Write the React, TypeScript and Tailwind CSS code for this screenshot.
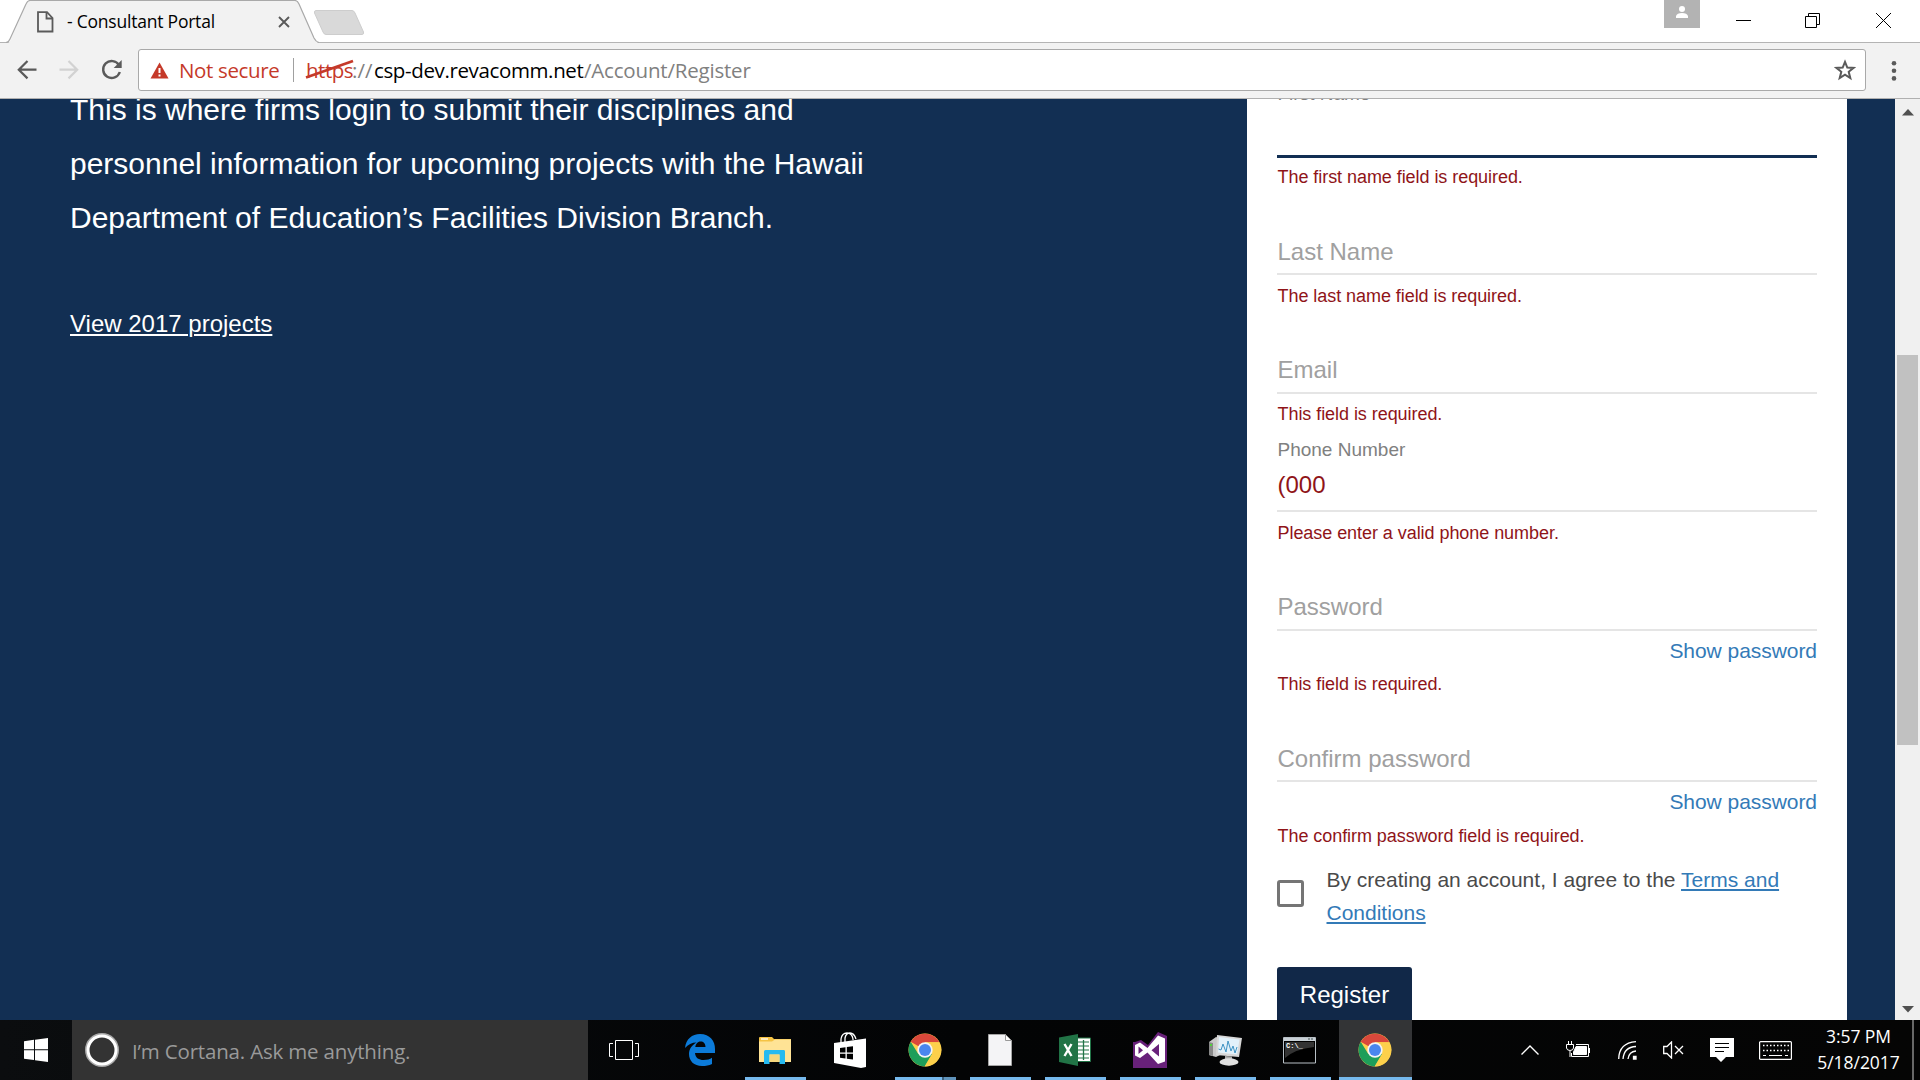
import React from "react";

function TabStrip() {
  return (
    <div className="flex h-[43px] items-start bg-white border-b border-[#b4b4b4] shrink-0">
      <div className="relative h-[43px] w-[320px] shrink-0">
        <svg className="absolute left-0 top-0" width="320" height="43" viewBox="0 0 320 43">
          <path d="M8 43Q10 42 11 39L26 4Q27.500 .5 30 .5H295Q297.500 .5 299 4L314 38Q316 42.500 319 43Z" fill="#f2f2f2" />
          <path d="M6 42.500Q9 42 10 39L26 4Q27.500 .5 30 .5H295Q297.500 .5 299 4L314 38Q316 42 319 42.500" fill="none" stroke="#a9a9a9" strokeWidth="1.200" />
        </svg>
        <div className="relative flex h-[43px] items-center pl-[37px]">
          <svg width="17" height="22" viewBox="0 0 17 22" fill="none" stroke="#5a5a5a" strokeWidth="1.800">
            <path d="M1 1.200H10L15.500 7V20.500H1Z" />
            <path d="M9.500 1.500V7.500H15" />
          </svg>
          <span className="-mt-[2px] ml-[13px] w-[148px] whitespace-nowrap text-[17.500px] leading-[22px] tracking-[-0.220px] text-black font-['Open_Sans',sans-serif]">- Consultant Portal</span>
          <svg className="ml-[63px] mt-px" width="12" height="12" viewBox="0 0 12 12" stroke="#5a5a5a" strokeWidth="1.900">
            <path d="M1 1L11 11M11 1L1 11" />
          </svg>
        </div>
      </div>
      <svg className="-ml-[7px] mt-[9px] shrink-0" width="52" height="27" viewBox="0 0 52 27">
        <path d="M3 1.500H39Q41 1.500 42 4L50.500 23Q51 25.500 49 25.500H13Q11 25.500 10 23L1.500 4Q1 1.500 3 1.500Z" fill="#d9d9d9" stroke="#cdcdcd" />
      </svg>
      <div className="ml-auto flex items-start">
        <div className="flex h-7 w-9 justify-center bg-[#b3b3b3]">
          <svg width="12" height="19" viewBox="0 0 12 19" fill="#fff">
            <circle cx="6" cy="9" r="3" />
            <path d="M0 18V16Q1 13 6 13T12 16V18Z" />
          </svg>
        </div>
        <svg className="ml-9 mt-[12px]" width="15" height="17" viewBox="0 0 15 17"><path d="M0 8.500H15" stroke="#000" /></svg>
        <svg className="ml-[54px] mt-[12px]" width="15" height="17" viewBox="0 0 15 17" fill="none" stroke="#000">
          <path d="M.5 4.500H11.500V15.500H.5ZM3.500 4.500V1.500H14.500V12.500H11.500" />
        </svg>
        <svg className="ml-[56px] mr-[29px] mt-[12px]" width="15" height="17" viewBox="0 0 15 17" stroke="#000"><path d="M0 1L15 16M15 1L0 16" /></svg>
      </div>
    </div>
  );
}

function Toolbar() {
  return (
    <div className="flex h-[56px] shrink-0 items-start border-b border-[#b0b0b0] bg-[#f2f2f2] pt-[6px]">
      <svg className="ml-[17px] mt-[11px]" width="20" height="20" viewBox="0 0 20 20" fill="none" stroke="#5a5a5a" strokeWidth="2.200">
        <path d="M19.500 9.700H2M10.500 1L1.800 9.700L10.500 18.400" />
      </svg>
      <svg className="ml-[22px] mt-[11px]" width="20" height="20" viewBox="0 0 20 20" fill="none" stroke="#d2d2d2" strokeWidth="2.200">
        <path d="M.5 9.700H18M9.500 1L18.200 9.700L9.500 18.400" />
      </svg>
      <svg className="ml-[22px] mt-[10px]" width="22" height="22" viewBox="0 0 22 22">
        <path d="M18 6.200A8.500 8.500 0 1 0 18.800 13" fill="none" stroke="#5a5a5a" strokeWidth="2.400" />
        <path d="M20.700 1V9H12.700Z" fill="#5a5a5a" />
      </svg>
      <div className="ml-[15px] flex h-[42px] w-[1728px] items-center rounded-[3px] border border-[#a9a9a9] bg-white">
        <svg className="ml-[11px]" width="19" height="17" viewBox="0 0 19 17">
          <path d="M9.500 .5L18.500 16.500H.5Z" fill="#c53929" />
          <path d="M9.500 6V11M9.500 12.500V14.500" stroke="#fff" strokeWidth="2" />
        </svg>
        <span className="ml-[10px] w-[102px] whitespace-nowrap text-[20.500px] leading-[28px] tracking-[-0.350px] text-[#c53929] font-['Open_Sans',sans-serif]">Not secure</span>
        <span className="ml-[12px] h-6 w-px bg-[#a0a0a0]" />
        <div className="ml-[12px] flex whitespace-nowrap text-[20.500px] leading-[28px] text-[#808080] font-['Open_Sans',sans-serif]">
          <span className="relative w-[46px] tracking-[-0.500px] text-[#c53929]">
            https
            <svg className="absolute -left-px top-[3px]" width="50" height="22" viewBox="0 0 50 22"><path d="M1 18.500L48 2" stroke="#c53929" strokeWidth="2.800" /></svg>
          </span>
          <span className="w-[22px]">://</span>
          <span className="w-[210px] tracking-[-0.370px] text-black">csp-dev.revacomm.net</span>
          <span className="tracking-[-0.190px]">/Account/Register</span>
        </div>
        <svg className="ml-auto mr-[9px]" width="22" height="22" viewBox="0 0 22 22" fill="none" stroke="#5a5a5a" strokeWidth="2">
          <path d="M11 2.800L13.300 8.500L19.500 8.900L14.700 12.800L16.300 19L11 15.600L5.700 19L7.300 12.800L2.500 8.900L8.700 8.500Z" />
        </svg>
      </div>
      <svg className="ml-[25px] mt-[11px]" width="6" height="22" viewBox="0 0 6 22" fill="#5a5a5a">
        <circle cx="3" cy="3.200" r="2.300" /><circle cx="3" cy="10.800" r="2.300" /><circle cx="3" cy="18.400" r="2.300" />
      </svg>
    </div>
  );
}

function ErrorText({ children }: { children: React.ReactNode }) {
  return <p className="h-6 whitespace-nowrap pl-[0.500px] text-[18px] leading-6 tracking-[-0.055px] text-[#8f1418]">{children}</p>;
}
function Label({ children }: { children: React.ReactNode }) {
  return <div className="h-8 whitespace-nowrap pl-[0.500px] text-2xl leading-8 text-[#a0a0a0]">{children}</div>;
}
function ShowPassword() {
  return <a className="block h-7 text-right text-[21px] leading-7 tracking-[-0.050px] text-[#337ab7]">Show password</a>;
}

function Form() {
  return (
    <section className="h-full w-[600px] shrink-0 overflow-hidden bg-white px-[30px]">
      <div className="-mt-[17px] h-6 pl-[0.500px] text-[19px] leading-6 text-[#808080]">First Name</div>
      <div className="mt-[49px] h-[3px] bg-[#122f53]" />
      <div className="mt-[7px]"><ErrorText>The first name field is required.</ErrorText></div>
      <div className="mt-[47px]"><Label>Last Name</Label></div>
      <div className="mt-[5px] h-[2px] bg-[#e5e5e5]" />
      <div className="mt-[9px]"><ErrorText>The last name field is required.</ErrorText></div>
      <div className="mt-[46px]"><Label>Email</Label></div>
      <div className="mt-[6px] h-[2px] bg-[#e5e5e5]" />
      <div className="mt-[8px]"><ErrorText>This field is required.</ErrorText></div>
      <div className="mt-[12px] h-6 pl-[0.500px] text-[19px] leading-6 text-[#808080]">Phone Number</div>
      <div className="mt-[7px] h-8 pl-[0.500px] text-2xl leading-8 text-[#8f1418]">(000</div>
      <div className="mt-[9px] h-[2px] bg-[#e5e5e5]" />
      <div className="mt-[9px]"><ErrorText>Please enter a valid phone number.</ErrorText></div>
      <div className="mt-[46px]"><Label>Password</Label></div>
      <div className="mt-[6px] h-[2px] bg-[#e5e5e5]" />
      <div className="mt-[6px]"><ShowPassword /></div>
      <div className="mt-[7px]"><ErrorText>This field is required.</ErrorText></div>
      <div className="mt-[47px]"><Label>Confirm password</Label></div>
      <div className="mt-[5px] h-[2px] bg-[#e5e5e5]" />
      <div className="mt-[6px]"><ShowPassword /></div>
      <div className="mt-[8px]"><ErrorText>The confirm password field is required.</ErrorText></div>
      <div className="mt-[15px] flex">
        <span className="mt-[17px] h-[27px] w-[27px] shrink-0 rounded-[3px] border-[3px] border-[#757575]" />
        <p className="ml-[22px] whitespace-nowrap pl-[0.500px] text-[21px] leading-[33px] text-[#4a4a4a]">
          By creating an account, I agree to the{" "}
          <a className="text-[#337ab7] underline decoration-2 underline-offset-2">Terms and<br />Conditions</a>
        </p>
      </div>
      <button className="mt-[38px] block h-[60px] w-[135px] rounded-[3px] bg-[#112848] pb-[5px] text-2xl text-white">Register</button>
    </section>
  );
}

function Page() {
  return (
    <main className="flex h-[921px] shrink-0 overflow-hidden bg-[#122f53] font-['Liberation_Sans',sans-serif]">
      <section className="w-[1247px] shrink-0 pl-[70px] text-white">
        <p className="-mt-[16px] whitespace-nowrap text-[30px] leading-[54px]">
          This is where firms login to submit their disciplines and<br />
          personnel information for upcoming projects with the Hawaii<br />
          Department of Education’s Facilities Division Branch.
        </p>
        <a className="mt-[63px] block h-8 text-2xl leading-8 underline decoration-2 underline-offset-2">View 2017 projects</a>
      </section>
      <Form />
      <div className="ml-auto flex w-[25px] flex-col items-center bg-[#f0f0f0]">
        <svg className="mt-[10px]" width="12" height="7" viewBox="0 0 12 7"><path d="M6 0L12 6.500H0Z" fill="#505050" /></svg>
        <div className="mt-[239px] h-[390px] w-[21px] bg-[#c1c1c1]" />
        <svg className="mb-[7px] mt-auto" width="12" height="7" viewBox="0 0 12 7"><path d="M0 0H12L6 6.500Z" fill="#505050" /></svg>
      </div>
    </main>
  );
}

function ChromeIcon() {
  return (
    <svg width="34" height="34" viewBox="0 0 34 34">
      <circle cx="17" cy="17" r="16.500" fill="#fdd04b" />
      <path d="M17 17L2.700 8.800A16.500 16.500 0 0 1 31.300 9.200H17Z" fill="#d9483b" />
      <path d="M2.700 8.800L10.300 21L17 17L24 21L16.500 33.500A16.500 16.500 0 0 1 2.700 8.800Z" fill="#1e9e5a" />
      <path d="M24.200 21L17 33.500A16.500 16.500 0 0 0 31.300 9.200H17Z" fill="#fdd04b" />
      <circle cx="17" cy="17" r="7.700" fill="#f4f4f4" />
      <circle cx="17" cy="17" r="6" fill="#4a86ee" />
    </svg>
  );
}

function TaskView() {
  return (
    <svg width="30" height="20" viewBox="0 0 30 20" fill="none" stroke="#fff">
      <path d="M6.500 .5H23.500V19.500H6.500ZM4 3.500H.5V16.500H4M26 3.500H29.500V16.500H26" />
    </svg>
  );
}
function EdgeIcon() {
  return (
    <svg width="30" height="32" viewBox="0 0 30 32">
      <path d="M0 14C1 5 7 0 15 0C25 0 30 7 30 15V19H10C10.500 24 14 26 18.500 26C22 26 25 25 27 23.700V30C24 31.500 21 32 17 32C9 32 4 27 4 20C4 15 7 11 11.500 8.500C7 8.500 3 10.500 0 14ZM10.300 13H20.500C20.500 9.500 18.500 7.500 15.600 7.500C12.500 7.500 10.700 10 10.300 13Z" fill="#0c7bd9" fillRule="evenodd" />
    </svg>
  );
}
function FolderIcon() {
  return (
    <svg width="32" height="27" viewBox="0 0 32 27">
      <path d="M0 1Q0 0 1 0H13L15 2H32V25H0Z" fill="#f5c344" />
      <path d="M0 4.500H13L16 2.500H32V25H0Z" fill="#ffe395" />
      <path d="M2 2H9" stroke="#fff" strokeWidth="1.300" />
      <path d="M5 27V14.500Q5 13 6.500 13H25Q26 13 26 14.500V27H20.500V17.500H10.500V27Z" fill="#26baf0" />
      <path d="M10.500 17.500H20.500V25H10.500Z" fill="#f6d77d" />
    </svg>
  );
}
function StoreIcon() {
  return (
    <svg width="32" height="36" viewBox="0 0 32 36">
      <path d="M7 11V7Q8 1 13 1T19 7V8M11 10V6Q12 1 16 1T22 7" fill="none" stroke="#fff" strokeWidth="1.300" />
      <path d="M0 11L32 6.500V35L27 36L0 31Z" fill="#fff" />
      <path d="M6 16L11.500 15.300V20.500H6ZM12.800 15.100L19 14.300V20.500H12.800ZM6 21.700H11.500V26.500L6 25.800ZM12.800 21.700H19V27.500L12.800 26.700Z" fill="#000" />
    </svg>
  );
}
function DocIcon() {
  return (
    <svg width="24" height="32" viewBox="0 0 24 32">
      <path d="M.5 .5H17.500L23.500 6.500V31.500H.5Z" fill="#f4f4f6" stroke="#a5a5a5" />
      <path d="M17.500 .5V6.500H23.500Z" fill="#fff" stroke="#999" />
    </svg>
  );
}
function ExcelIcon() {
  return (
    <svg width="32" height="32" viewBox="0 0 32 32">
      <path d="M16 4H31.500V27.500H16Z" fill="#fff" stroke="#217346" />
      <path d="M18 8H30M18 12H30M18 16H30M18 20H30M18 24H30" stroke="#217346" strokeWidth="1.200" />
      <path d="M24.500 6V26" stroke="#217346" strokeWidth="1.300" />
      <path d="M0 3.500L19 0V32L0 28Z" fill="#217346" />
      <path d="M5.500 10L12.500 22M12.500 10L5.500 22" stroke="#fff" strokeWidth="2.400" />
    </svg>
  );
}
function VisualStudioIcon() {
  return (
    <svg width="34" height="36" viewBox="0 0 34 36">
      <path d="M0 10H2L8 8L15 13L25 0L34 4V36H0Z" fill="#68217a" />
      <path d="M2 13L7 10.500L14.500 16L25 3.500L32 6.500V29.500L25 32L14.500 20.500L7 26L2 23.500Z" fill="#fff" />
      <path d="M5.500 14.500L10 18.200L5.500 22ZM18.500 18.200L26 12V24.500Z" fill="#68217a" />
    </svg>
  );
}
function MonitorIcon() {
  return (
    <svg width="34" height="31" viewBox="0 0 34 31">
      <path d="M1 7L8 2L14 4V19L8 22L1 20Z" fill="#c9c9c9" />
      <path d="M1 7L5 8V21L1 20Z" fill="#888" />
      <path d="M2 10H4" stroke="#4fd13a" strokeWidth="2" />
      <path d="M9 0L34 3L31 22L8 20Z" fill="#d8d8d8" />
      <path d="M11 2L31.500 4.500L29 19.500L10 17.500Z" fill="#e2f1fa" />
      <path d="M10.500 14L13 15L15 9L18 17L20 6L23 16L25 11L27 18L29 12" fill="none" stroke="#3e93c4" strokeWidth="1" />
      <path d="M17 21L24 21.500V25H17Z" fill="#aaa" />
      <ellipse cx="21" cy="27" rx="9.500" ry="3.700" fill="#e0e0e0" />
    </svg>
  );
}
function TerminalIcon() {
  return (
    <svg width="33" height="27" viewBox="0 0 33 27">
      <path d="M.5 .5H32.500V26H.5Z" fill="#000" stroke="#b8c0c6" />
      <path d="M1 1H32V4H1Z" fill="#c8d0d6" />
      <path d="M2 5H31V10Q12 12 2 21Z" fill="#333" />
      <text x="3" y="10.500" fill="#fff" fontSize="7" fontFamily="Liberation Mono, monospace" fontWeight="bold">C:\_</text>
      <path d="M25 2H27M28 2H30" stroke="#455" />
    </svg>
  );
}

const apps: { icon: React.ReactNode; bar: string }[] = [
  { icon: <TaskView />, bar: "" },
  { icon: <EdgeIcon />, bar: "" },
  { icon: <FolderIcon />, bar: "full" },
  { icon: <StoreIcon />, bar: "" },
  { icon: <ChromeIcon />, bar: "stack" },
  { icon: <DocIcon />, bar: "full" },
  { icon: <ExcelIcon />, bar: "full" },
  { icon: <VisualStudioIcon />, bar: "full" },
  { icon: <MonitorIcon />, bar: "full" },
  { icon: <TerminalIcon />, bar: "full" },
];

function Taskbar() {
  return (
    <footer className="flex h-[60px] shrink-0 bg-[#050607] bg-linear-to-r from-[#0b0d0f] via-[#030405] to-[#050505] text-white font-['Open_Sans',sans-serif]">
      <div className="flex w-[72px] shrink-0 items-center justify-center">
        <svg width="24" height="24" viewBox="0 0 24 24" fill="#fff">
          <path d="M0 3.300L10 1.800V11.300H0ZM11 1.700L24 0V11.300H11ZM0 12.300H10V22L0 20.700ZM11 12.300H24V24L11 22.200Z" />
        </svg>
      </div>
      <div className="flex w-[516px] shrink-0 items-center bg-[#333333] pl-[13px]">
        <svg width="34" height="34" viewBox="0 0 34 34" fill="none">
          <circle cx="17" cy="17" r="15.500" stroke="#aaa" strokeWidth="3" />
          <circle cx="17" cy="17" r="14" stroke="#fff" strokeWidth="3" />
        </svg>
        <span className="ml-[13px] mt-[2px] whitespace-nowrap text-[20.500px] leading-7 tracking-[-0.180px] text-[#9a9a9a]">I’m Cortana. Ask me anything.</span>
      </div>
      <div className="flex shrink-0">
        {apps.map((a, i) => (
          <div key={i} className="flex h-[60px] w-[75px] flex-col items-center">
            <div className={i === 0 ? "flex h-[57px] items-center pr-[3px] pt-[3px]" : i === 9 ? "flex h-[57px] items-center pr-[2px] pt-[3px]" : "flex h-[57px] items-center pr-px pt-[3px]"}>{a.icon}</div>
            {a.bar === "full" && <div className="h-[3px] w-[61px] bg-[#76b9ed]" />}
            {a.bar === "stack" && (
              <div className="flex h-[3px] w-[61px]">
                <div className="w-[47px] bg-[#76b9ed]" /><div className="w-[2px] bg-[#3d617d]" /><div className="w-[12px] bg-[#5f93bb]" />
              </div>
            )}
          </div>
        ))}
        <div className="ml-px flex h-[60px] w-[73px] flex-col items-center bg-[#333436]">
          <div className="flex h-[57px] items-center pr-px pt-[3px]"><ChromeIcon /></div>
          <div className="h-[3px] w-full bg-[#76b9ed]" />
        </div>
      </div>
      <div className="ml-auto flex items-center">
        <svg width="18" height="10" viewBox="0 0 18 10" fill="none" stroke="#fff" strokeWidth="1.400"><path d="M.5 9.500L9 1L17.500 9.500" /></svg>
        <svg className="ml-[27px]" width="24" height="18" viewBox="0 0 24 18" fill="none" stroke="#fff">
          <path d="M10 3.500H22.500V15.500H5.500V12M23.500 7V12" />
          <path d="M10 5.500H20.500V13.500H7.500V11Z" fill="#fff" />
          <path d="M2.500 0V3M5.500 0V3M.5 3.500H7.500V7Q7 9.500 4 9.500T.5 7ZM4 10V16" />
        </svg>
        <svg className="ml-[28px]" width="19" height="19" viewBox="0 0 19 19" fill="none" stroke="#fff" strokeWidth="1.300">
          <path d="M.7 18Q1 2 18 .7" /><path d="M5 18Q6 6 18 5.500" /><path d="M10 18Q11 10.500 18 10" />
          <path d="M15.500 15.500H18V18H15.500Z" fill="#fff" />
        </svg>
        <svg className="ml-[26px]" width="21" height="18" viewBox="0 0 21 18" fill="none" stroke="#fff" strokeWidth="1.300">
          <path d="M.7 5.500H4L8.500 1V17L4 12.500H.7ZM12 5L20 13M20 5L12 13" />
        </svg>
        <svg className="ml-[26px]" width="24" height="24" viewBox="0 0 24 24">
          <path d="M0 0H24V19H16L11 24L6 19H0Z" fill="#fff" />
          <path d="M5 5.500H19M5 9.500H19M5 13.500H14" stroke="#000" />
        </svg>
        <svg className="ml-[25px]" width="33" height="19" viewBox="0 0 33 19" fill="none" stroke="#fff">
          <rect x=".6" y=".6" width="31.800" height="17.800" rx="1" strokeWidth="1.200" />
          <path d="M4 4.500H30M4 9.500H30" strokeDasharray="1.500 2" strokeWidth="1.300" />
          <path d="M4 14.500H7M10 14.500H23M26 14.500H29" strokeWidth="1.200" />
        </svg>
        <div className="-mt-[3px] ml-[25px] w-[83px] whitespace-nowrap text-center text-[17.500px] leading-[26px] tracking-[-0.050px]">
          <div>3:57 PM</div>
          <div>5/18/2017</div>
        </div>
        <div className="ml-[12px] mr-[6px] h-[60px] w-[2px] bg-[#686868]" />
      </div>
    </footer>
  );
}

export default function App() {
  return (
    <div className="flex h-[1080px] w-[1920px] flex-col overflow-hidden bg-white">
      <TabStrip />
      <Toolbar />
      <Page />
      <Taskbar />
    </div>
  );
}
